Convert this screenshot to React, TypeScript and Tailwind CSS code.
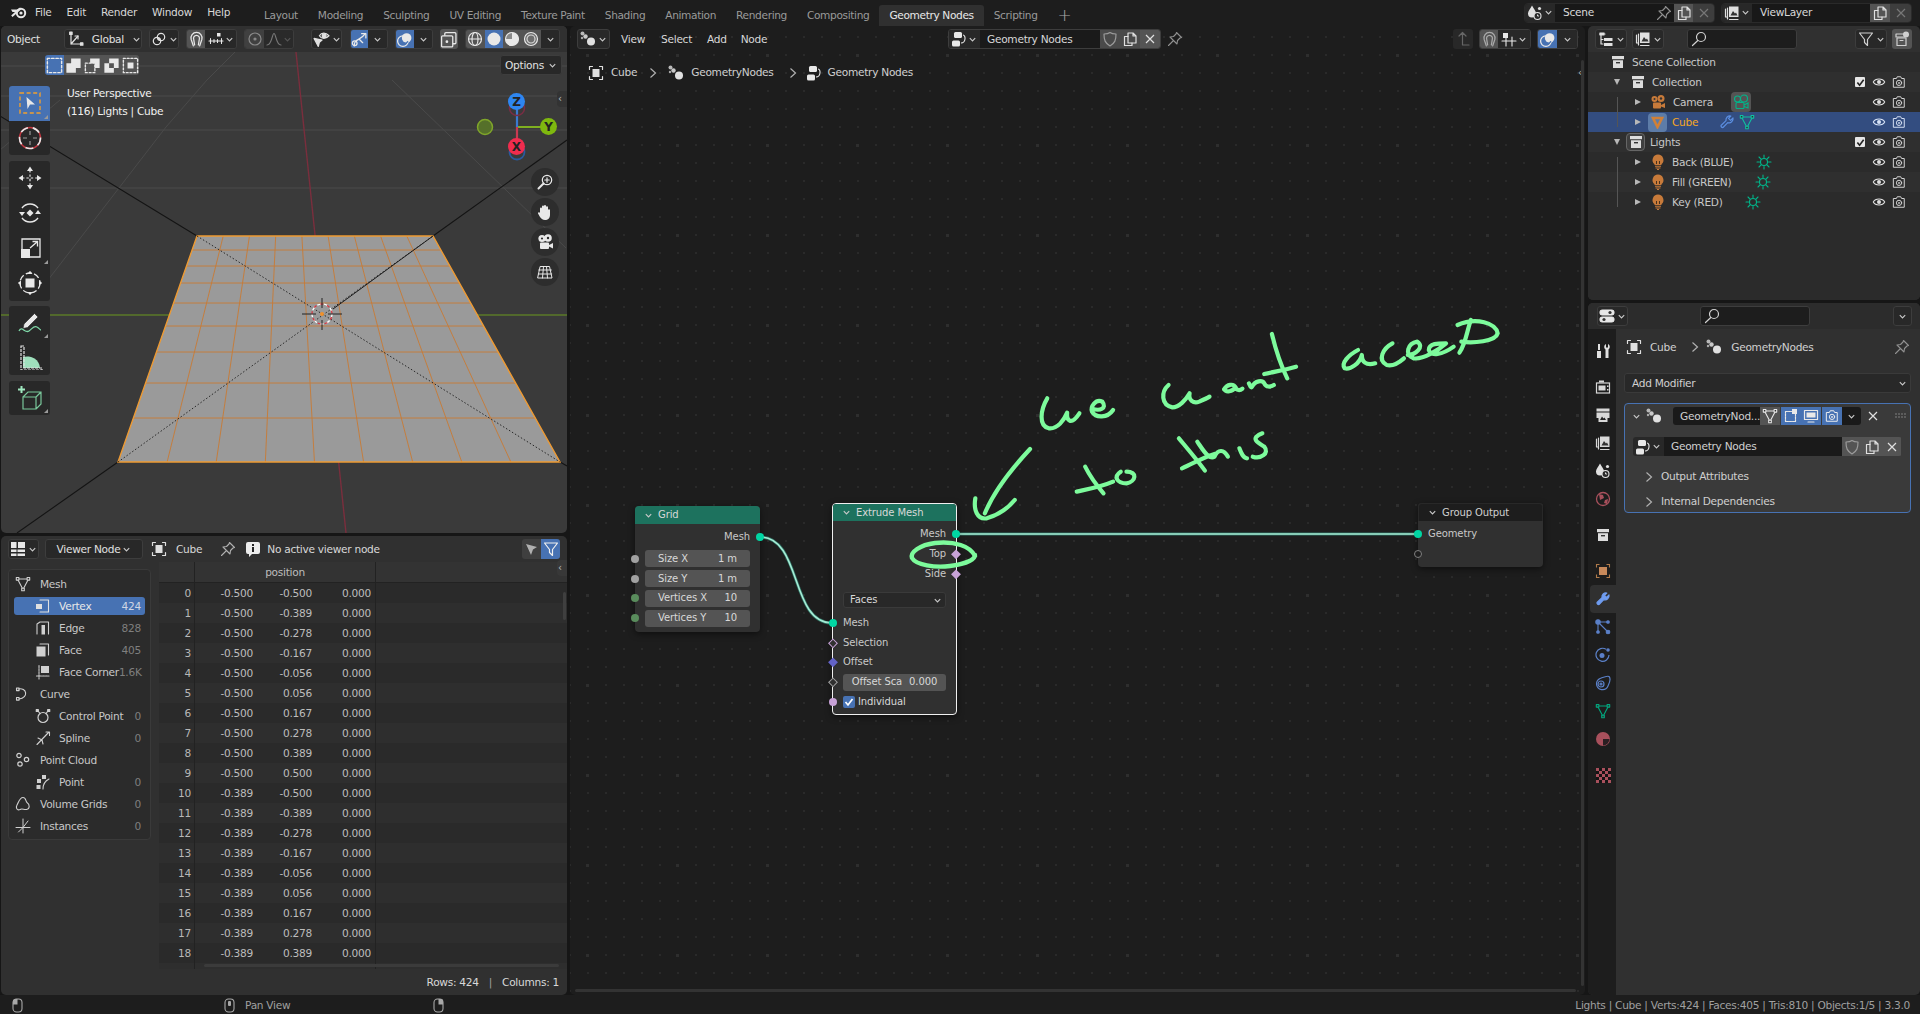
import React from "react";

type P = { className?: string; s?: number };
const Sv = ({ className = "", s = 16, children, w = 1.2 }: P & { children: React.ReactNode; w?: number }) => (
  <svg width={s} height={s} viewBox="0 0 16 16" fill="none" stroke="currentColor" strokeWidth={w} strokeLinecap="round" strokeLinejoin="round" className={"shrink-0 " + className}>
    {children}
  </svg>
);
const Chev = ({ className = "text-[#c8c8c8]" }: P) => (
  <svg width="9" height="9" viewBox="0 0 10 10" fill="none" stroke="currentColor" strokeWidth="1.3" className={"shrink-0 " + className}><path d="M2 3.5 L5 6.5 L8 3.5" /></svg>
);
const Right = ({ className = "text-[#b0b0b0]" }: P) => (
  <svg width="10" height="12" viewBox="0 0 10 12" fill="none" stroke="currentColor" strokeWidth="1.2" className={"shrink-0 " + className}><path d="M2.5 1.5 L7.5 6 L2.5 10.5" /></svg>
);
const Logo = () => (
  <svg width="18" height="16" viewBox="0 0 18 16" className="shrink-0">
    <circle cx="11" cy="9" r="4.2" fill="none" stroke="#e6e6e6" strokeWidth="2" />
    <circle cx="11" cy="9" r="1.6" fill="#e6e6e6" />
    <path d="M1 5.5 H7.5 L10 3.5 L11.5 5 L6 10 L2.5 13 L1.2 11.5 L5 8 L2.5 8 Z" fill="#e6e6e6" />
  </svg>
);
const Axes = () => <Sv><path d="M3 2 V13 H14 M3 13 L10 5" /><rect x="1.7" y="1" width="2.4" height="2.4" fill="currentColor" /><rect x="12.5" y="11.8" width="2.4" height="2.4" fill="currentColor" /><path d="M10 5 h-3 M10 5 v3" /></Sv>;
const Pivot = () => <Sv><circle cx="6" cy="10" r="3.7" /><circle cx="10" cy="6" r="3.7" /><circle cx="8" cy="8" r="1" fill="currentColor" /></Sv>;
const Magnet = () => <Sv s={17}><path d="M5 14 L3 8 A5.2 5.2 0 1 1 13 8 L11 14 M6.2 13 L5.4 8 A2.8 2.8 0 1 1 10.6 8 L9.8 13" /></Sv>;
const SnapInc = () => <Sv w={1.1}><path d="M1 10 H15 M2.5 7.5 V12.5 M6 8.5 V11.5 M9.5 8.5 V11.5 M13.5 7.5 V12.5" /><rect x="9" y="2" width="3.5" height="3.5" fill="currentColor" stroke="none" /></Sv>;
const GridSnap = () => <Sv w={1.1}><path d="M1 10 H15 M5 5 V15 M11 6 V15" /><rect x="2" y="2" width="5" height="5" fill="currentColor" stroke="none" /></Sv>;
const PropC = () => <Sv><circle cx="8" cy="8" r="6" /><circle cx="8" cy="8" r="1" fill="currentColor" /></Sv>;
const Falloff = () => <Sv><path d="M1 14 C6 14 6 2.5 8 2.5 C10 2.5 10 14 15 14" /></Sv>;
const VisIc = () => <Sv s={17}><path d="M6 4.5 C8 1.2 12 1.2 15 4.5 C12 7.8 8 7.8 6 4.5 Z" /><circle cx="10.5" cy="4.5" r="1.8" fill="currentColor" /><path d="M1 7 L8.5 8.5 L6 10.5 L5 14.5 Z" fill="currentColor" /></Sv>;
const GizmoIc = () => <Sv s={17}><path d="M3 14 C3 7 9 9 13 3" /><circle cx="3.5" cy="11.5" r="2.2" /><path d="M10 2.5 H14 V6.5" /><path d="M8 8 L11 11" /></Sv>;
const Overlay = () => <Sv s={17}><circle cx="6.5" cy="9.5" r="5" /><circle cx="10" cy="6.5" r="4.5" fill="currentColor" stroke="none" /><path d="M7 12 A4 4 0 0 0 11 10" stroke="#4772b3" /></Sv>;
const Xray = () => <Sv s={17}><rect x="4.5" y="1.5" width="10.5" height="10.5" rx="1" /><rect x="1.5" y="4.5" width="10.5" height="10.5" rx="1" fill="#545454" /><circle cx="6.5" cy="10" r=".7" fill="currentColor" /></Sv>;
const Wire = () => <Sv><circle cx="8" cy="8" r="6.5" /><ellipse cx="8" cy="8" rx="3" ry="6.5" /><path d="M1.5 8 H14.5" /></Sv>;
const SolidB = () => <Sv><circle cx="8" cy="8" r="6.5" fill="currentColor" stroke="none" /></Sv>;
const Mat = () => <Sv><circle cx="8" cy="8" r="6.5" fill="#8a8a8a" /><path d="M8 1.5 A6.5 6.5 0 0 1 8 14.5 L8 8 L1.5 8 A6.5 6.5 0 0 1 8 1.5 Z" fill="currentColor" stroke="none" transform="rotate(90 8 8)" /></Sv>;
const Rend = () => <Sv><circle cx="8" cy="8" r="6.5" fill="#6e6e6e" /><circle cx="8" cy="8" r="4" stroke="#d8d8d8" /></Sv>;
const M1 = () => <Sv s={19}><rect x="2" y="2" width="12" height="12" strokeDasharray="2 1.6" /></Sv>;
const M2 = () => <Sv s={19}><path d="M2 6 H6 V2 H14 V10 H10 V14 H2 Z" fill="currentColor" stroke="none" /></Sv>;
const M3 = () => <Sv s={19}><rect x="2" y="6" width="8" height="8" strokeDasharray="1.6 1.6" /><path d="M6 2 H14 V10 H10 V6 H6 Z" fill="currentColor" stroke="none" /></Sv>;
const M4 = () => <Sv s={19}><path d="M2 6 H6 V2 H14 V10 H10 V14 H2 Z M6 6 V10 H10 V6 Z" fillRule="evenodd" fill="currentColor" stroke="none" /></Sv>;
const M5 = () => <Sv s={19}><rect x="2" y="2" width="12" height="12" strokeDasharray="1.6 1.6" /><rect x="5.5" y="5.5" width="5" height="5" fill="currentColor" stroke="none" /></Sv>;

const T1 = () => <svg width="26" height="26" viewBox="0 0 26 26" fill="none"><rect x="3" y="3" width="20" height="20" stroke="#f0a030" strokeWidth="1.4" strokeDasharray="4 2.6" /><path d="M9.5 7 L18 14.5 L13 14.5 L10.5 19 Z" fill="#e8e8e8" /></svg>;
const T2 = () => <svg width="26" height="26" viewBox="0 0 26 26" fill="none"><circle cx="13" cy="13" r="10.5" stroke="#c0363f" strokeWidth="1.5" /><circle cx="13" cy="13" r="10.5" stroke="#e8e8e8" strokeWidth="1.6" strokeDasharray="8 5" /><path d="M13 6 V10 M13 16 V20 M6 13 H10 M16 13 H20" stroke="#999" strokeWidth="1.2" /></svg>;
const T3 = () => <svg width="26" height="26" viewBox="0 0 26 26" fill="#e8e8e8" stroke="#e8e8e8" strokeWidth="1.2"><path d="M13 5 V21 M5 13 H21" fill="none" strokeDasharray="2.4 2" /><path d="M13 1.5 L16 6 H10 Z M13 24.5 L16 20 H10 Z M1.5 13 L6 10 V16 Z M24.5 13 L20 10 V16 Z" stroke="none" /></svg>;
const T4 = () => <svg width="26" height="26" viewBox="0 0 26 26" fill="none" stroke="#e8e8e8" strokeWidth="1.4"><path d="M5 8 A10 10 0 0 1 21 8 M21 18 A10 10 0 0 1 5 18" /><path d="M13 9.5 L16.5 13 L13 16.5 L9.5 13 Z" fill="#e8e8e8" stroke="none" /><path d="M2 12 H8 L5 16 Z M18 14 H24 L21 10 Z" fill="#e8e8e8" stroke="none" /></svg>;
const T5 = () => <svg width="26" height="26" viewBox="0 0 26 26" fill="none" stroke="#e8e8e8" strokeWidth="1.3"><path d="M5 15 V4 H23 V22 H13" /><rect x="4" y="14" width="9" height="9" fill="#e8e8e8" stroke="none" /><path d="M13 13 L20 7 M15.5 6.5 H20.5 V11.5" /></svg>;
const T6 = () => <svg width="26" height="26" viewBox="0 0 26 26" fill="none" stroke="#e8e8e8" strokeWidth="1.3"><circle cx="13" cy="13" r="10" strokeDasharray="6 2.5" /><rect x="8.5" y="8.5" width="9" height="9" fill="#e8e8e8" stroke="none" /><path d="M13 .8 L15.5 4 H10.5 Z M13 25.2 L15.5 22 H10.5 Z M.8 13 L4 10.5 V15.5 Z M25.2 13 L22 10.5 V15.5 Z" fill="#e8e8e8" stroke="none" /></svg>;
const T7 = () => <svg width="26" height="26" viewBox="0 0 26 26" fill="none"><path d="M7 14 L17.5 3.5 L21 7 L10.5 17.5 L6 18.5 Z" fill="#e8e8e8" stroke="#222" strokeWidth=".6" /><path d="M2 21 C5 15 8 24 12 21 C15 19 17 15 20 17 C22 18 23 20 24 20" stroke="#7fd8a8" strokeWidth="1.3" /></svg>;
const T8 = () => <svg width="26" height="26" viewBox="0 0 26 26" fill="none"><path d="M6 13 A13 12 0 0 1 23 24 H6 Z" fill="#9fe0bd" /><path d="M4 2 H7 V24 H25 V26 H4 Z" fill="none" stroke="#e0e0e0" strokeWidth="1.2" strokeDasharray="3 1" /></svg>;
const T9 = () => <svg width="26" height="26" viewBox="0 0 26 26" fill="none" stroke="#79c79a" strokeWidth="1.2"><path d="M6 12 H19 V24 H6 Z M6 12 L11 7 H24 V19 L19 24 M19 12 L24 7" /><path d="M1 4.5 H8 M4.5 1 V8" stroke="#9fe8bf" strokeWidth="2" /></svg>;

const ObjB = ({ className = "text-[#e0e0e0]" }: P) => <Sv className={className}><path d="M1.5 4.5 V1.5 H4.5 M11.5 1.5 H14.5 V4.5 M14.5 11.5 V14.5 H11.5 M4.5 14.5 H1.5 V11.5" /><rect x="4.5" y="4" width="7" height="8" fill="currentColor" stroke="none" /></Sv>;
const PinI = ({ className = "text-[#909090]" }: P) => <Sv className={className} w={1.1}><path d="M9.5 1.5 L14.5 6.5 L13 7 L10.5 9.5 L10 13 L3 6 L6.5 5.5 L9 3 Z M6.5 9.5 L1.5 14.5" /></Sv>;
const GeoI = () => <svg width="16" height="16" viewBox="0 0 16 16" fill="#e0e0e0" className="shrink-0"><circle cx="2.5" cy="2.5" r="2" fill="#b8b8b8" /><circle cx="5.5" cy="5.5" r="2.2" fill="#c8c8c8" /><circle cx="11" cy="10.5" r="4" /><circle cx="2" cy="7" r="1.2" fill="#aaa" /></svg>;
const NodeTreeI = () => <svg width="15" height="16" viewBox="0 0 15 16" fill="none" stroke="#e8e8e8" strokeWidth="1.1" className="shrink-0"><rect x="2" y="1" width="8" height="6" rx="1.5" fill="#e8e8e8" stroke="none" /><rect x="0" y="9.5" width="8" height="6" rx="1.5" fill="#e8e8e8" stroke="none" /><path d="M11 4 C14 4 14 12 9 12" /></svg>;
const Eye = ({ className = "text-[#e0e0e0]" }: P) => <Sv s={14} className={className} w={1.3}><path d="M1.5 8 C4 3.5 12 3.5 14.5 8 C12 12.5 4 12.5 1.5 8 Z" /><circle cx="8" cy="8" r="2.3" fill="currentColor" stroke="none" /></Sv>;
const CamR = ({ className = "text-[#d8d8d8]" }: P) => <Sv s={14} className={className} w={1.1}><path d="M2 4 H5 L6 2 H10 L11 4 H14 V14 H2 Z" /><circle cx="8" cy="9" r="3" /><circle cx="8" cy="9" r="1" fill="currentColor" stroke="none" /></Sv>;
const Check = () => <span className="w-[10px] h-[10px] bg-[#e6e6e6] rounded-[1px] flex items-center justify-center"><svg width="9" height="9" viewBox="0 0 10 10" fill="none" stroke="#222" strokeWidth="1.8"><path d="M1.5 5 L4 8 L8.5 2" /></svg></span>;
const Box = () => <svg width="14" height="14" viewBox="0 0 14 14" className="shrink-0"><rect x="1" y="1" width="12" height="3.2" fill="#dcdcdc" /><path d="M2 5.2 H12 V13 H2 Z" fill="#dcdcdc" /><rect x="5" y="7" width="4" height="1.4" fill="#333" /></svg>;
const MeshI = ({ className = "text-[#00b58a]" }: P) => <Sv className={className} w={1.1}><path d="M2.5 3 H13.5 L8 13.5 Z" /><rect x="1.3" y="1.5" width="2.6" height="2.6" fill="#303030" /><rect x="12.1" y="1.5" width="2.6" height="2.6" fill="#303030" /><rect x="6.7" y="12.2" width="2.6" height="2.6" fill="#303030" /></Sv>;
const Sun = ({ className = "text-[#00b58a]" }: P) => <Sv className={className} w={1.1}><circle cx="8" cy="8" r="3.5" /><path d="M8 1 V3.5 M8 12.5 V15 M1 8 H3.5 M12.5 8 H15 M3 3 L4.8 4.8 M11.2 11.2 L13 13 M3 13 L4.8 11.2 M11.2 4.8 L13 3" /></Sv>;
const Bulb = () => <svg width="14" height="16" viewBox="0 0 14 16" className="shrink-0"><path d="M7 0.5 A5.5 5.5 0 0 1 10.5 10.2 V11 H3.5 V10.2 A5.5 5.5 0 0 1 7 0.5 Z" fill="#c77a3a" /><path d="M5.5 7 V10 M8.5 7 V10" stroke="#3a2a1a" strokeWidth=".9" /><path d="M4 12.3 H10 M4.5 14 H9.5 M6 15.5 H8" stroke="#c77a3a" strokeWidth="1.1" /></svg>;
const CamO = () => <svg width="16" height="16" viewBox="0 0 16 16" className="shrink-0"><circle cx="4.5" cy="5" r="3" fill="#c77a3a" /><circle cx="11" cy="4.5" r="3.5" fill="#c77a3a" /><rect x="3" y="8.5" width="8" height="6" rx="1" fill="#c77a3a" /><path d="M11 11 L15 9 V14 L11 12.5 Z" fill="#c77a3a" /><circle cx="4.5" cy="5" r="1" fill="#333" /><circle cx="11" cy="4.5" r="1.2" fill="#333" /></svg>;
const CamG = () => <svg width="16" height="16" viewBox="0 0 16 16" fill="none" stroke="#00b58a" strokeWidth="1.1" className="shrink-0"><circle cx="4.5" cy="5" r="3" /><circle cx="11" cy="4.5" r="3.5" /><rect x="3" y="8.5" width="8" height="6" rx="1" /><path d="M11 11 L15 9 V14 L11 12.5" /></svg>;
const TriO = () => <span className="w-[19px] h-[19px] rounded-[4px] bg-[#5d7ca8] flex items-center justify-center -ml-[1px]"><svg width="13" height="13" viewBox="0 0 13 13" fill="none" stroke="#d08038" strokeWidth="2.6"><path d="M2 2 H11 L6.5 11 Z" /></svg></span>;
const Wr = ({ className = "text-[#5b8ee0]", f }: P & { f?: boolean }) => <Sv className={className} w={1.2}><path d="M14 4 A4 4 0 0 1 8.8 8.6 L4 13.5 A1.7 1.7 0 0 1 2 11.5 L7 6.6 A4 4 0 0 1 11.8 2 L9.5 4.4 L11.5 6.4 Z" fill={f ? "currentColor" : "none"} /></Sv>;

const TreeI = () => <Sv><path d="M1.5 3 H7 M3 3.5 V13 H5 M3 8.5 H5" /><rect x="6" y="7" width="8.5" height="3" fill="currentColor" stroke="none" /><rect x="6" y="12" width="8.5" height="3" fill="currentColor" stroke="none" /><rect x="1.5" y="1.5" width="5" height="3" fill="currentColor" stroke="none" /></Sv>;
const ImagesI = () => <Sv><path d="M3 12 H1.5 V4 M5.5 14.5 H14 M3.5 14 V3" /><rect x="5" y="1.5" width="9.5" height="10.5" fill="currentColor" stroke="none" /><path d="M6.5 10.5 L9 6 L11 8.5 L12 7.5 L13.5 10.5 Z" fill="#333" stroke="none" /></Sv>;
const SearchI = () => <Sv className="text-[#d0d0d0]"><circle cx="10" cy="6" r="4.5" /><path d="M6.8 9.5 L1.5 14.5" /></Sv>;
const FilterI = ({ className = "text-[#d0d0d0]" }: P) => <Sv className={className}><path d="M1.5 2 H14.5 L9.5 8.5 V14.5 L6.5 11.5 V8.5 Z" /></Sv>;
const NewColl = () => <Sv className="text-[#d0d0d0]"><rect x="2" y="3" width="9" height="3" fill="none" /><path d="M3 7 H12 V14.5 H3 Z M6 9.5 H9" /><circle cx="12" cy="3.5" r="3" fill="currentColor" stroke="none" /></Sv>;
const SceneI = () => <svg width="16" height="16" viewBox="0 0 16 16" className="shrink-0" fill="none"><path d="M5 0.5 C7 4 9 6 9 8.5 A4 4 0 1 1 1 8.5 C1 6 3 4 5 0.5 Z" fill="#e0e0e0" /><circle cx="10.5" cy="11" r="3.5" stroke="#e0e0e0" strokeWidth="1.1" fill="#2a2a2a" /><circle cx="12.5" cy="3.5" r="1.6" fill="#e0e0e0" /><path d="M10.5 9.5 V11 H12" stroke="#e0e0e0" /></svg>;
const CopyI = ({ className = "text-[#e0e0e0]" }: P) => <Sv className={className}><path d="M6 2 H11 L14 5 V12 H6 Z M11 2 V5 H14" /><path d="M6 5.5 H2.5 V14.5 H10 V12" /></Sv>;
const XI = ({ className = "text-[#e0e0e0]" }: P) => <svg width="12" height="12" viewBox="0 0 12 12" fill="none" stroke="currentColor" strokeWidth="1.2" className={"shrink-0 " + className}><path d="M2 2 L10 10 M10 2 L2 10" /></svg>;
const Shield = () => <Sv className="text-[#9a9a9a]"><path d="M8 1.5 C10 3 12 3 14 3 C14 9 13 12 8 15 C3 12 2 9 2 3 C4 3 6 3 8 1.5 Z" /></Sv>;

const bar = "flex items-center justify-center h-[20px] shrink-0";
const Dd = ({ className = "", children }: { className?: string; children: React.ReactNode }) => (
  <div className={`${bar} gap-[2px] bg-[#282828] rounded-[3px] border border-[#3d3d3d] text-[#e0e0e0] ${className}`}>{children}</div>
);
const Seg = ({ className = "", children }: { className?: string; children: React.ReactNode }) => (
  <div className={`${bar} text-[#e8e8e8] ${className}`}>{children}</div>
);

function TopBar() {
  const menu: [string, string][] = [["File", "ml-[35px]"], ["Edit", "ml-[15px]"], ["Render", "ml-[15px]"], ["Window", "ml-[15px]"], ["Help", "ml-[15px]"]];
  const tabs = ["Layout", "Modeling", "Sculpting", "UV Editing", "Texture Paint", "Shading", "Animation", "Rendering", "Compositing", "Geometry Nodes", "Scripting"];
  return (
    <div className="relative flex h-[26px] shrink-0 bg-[#1d1d1d] text-[#d8d8d8]">
      <div className="absolute left-[10px] top-[4px]"><Logo /></div>
      <div className="flex items-center h-[24px]">
        {menu.map(([m, c]) => <span key={m} className={c}>{m}</span>)}
      </div>
      <div className="absolute left-[254px] top-[5px] flex h-[21px] tracking-[-0.36px]">
        {tabs.map((t) => (
          <div key={t} className={`flex items-center px-[10px] rounded-t-[3px] ${t === "Geometry Nodes" ? "bg-[#303030] text-[#e8e8e8]" : "text-[#9a9a9a]"}`}>{t}</div>
        ))}
        <div className="flex items-center pl-[10px] text-[#a8a8a8] text-[17px] font-light">+</div>
      </div>
      <div className="ml-auto flex items-center gap-[6px] pr-[8px] h-[25px]">
        <div className="flex h-[20px] w-[191px] rounded-[4px] overflow-hidden border border-[#2a2a2a]">
          <div className="flex w-[30px] items-center justify-center gap-[1px] bg-[#282828]"><SceneI /><Chev /></div>
          <div className="flex flex-1 items-center justify-between bg-[#181818] pl-[8px] pr-[2px] text-[#d8d8d8]">Scene<PinI /></div>
          <div className="flex w-[19px] items-center justify-center bg-[#545454]"><CopyI /></div>
          <div className="flex w-[21px] items-center justify-center bg-[#3d3d3d]"><XI className="text-[#777]" /></div>
        </div>
        <div className="flex h-[20px] w-[191px] rounded-[4px] overflow-hidden border border-[#2a2a2a]">
          <div className="flex w-[30px] items-center justify-center gap-[1px] bg-[#282828] text-[#e0e0e0]"><ImagesI /><Chev /></div>
          <div className="flex flex-1 items-center bg-[#181818] pl-[8px] text-[#d8d8d8]">ViewLayer</div>
          <div className="flex w-[20px] items-center justify-center bg-[#545454]"><CopyI /></div>
          <div className="flex w-[21px] items-center justify-center bg-[#3d3d3d]"><XI className="text-[#777]" /></div>
        </div>
      </div>
    </div>
  );
}

function Scene3D() {
  const tl: [number, number] = [197, 236], tr: [number, number] = [433, 236], bl: [number, number] = [118, 462], br: [number, number] = [560, 462];
  const ys = [236, 250, 266, 283, 303, 326, 352, 383, 418, 462];
  const lerp = (a: number, b: number, t: number) => a + (b - a) * t;
  const xl = (y: number) => lerp(tl[0], bl[0], (y - 236) / 226);
  const xr = (y: number) => lerp(tr[0], br[0], (y - 236) / 226);
  return (
    <svg className="absolute inset-0 w-full h-full" viewBox="1 26 566 507" preserveAspectRatio="none">
      <g stroke="#4a4a4a" strokeWidth="1" fill="none">
        <path d="M0 96 H567 M0 130 H567 M0 188 H567 M0 66 H567" />
        <path d="M48 280 L166 127 L207 80 L235 52" />
        <path d="M392 80 L566 248" />
        <path d="M0 150 L60 100" />
      </g>
      <path d="M296 52 L346 533" stroke="#7a2e3d" strokeWidth="1.4" />
      <path d="M1 315 H567" stroke="#5b7a28" strokeWidth="1.4" />
      <g stroke="#141414" strokeWidth="1.1">
        <path d="M0 116 L197 236 M433 236 L567 140 M118 462 L17 533 M560 462 L567 466" />
      </g>
      <path d={`M${tl} L${tr} L${br} L${bl} Z`} fill="#9a9a9a" />
      <g stroke="#c87a34" strokeWidth=".9" fill="none">
        {ys.slice(1, -1).map((y) => <path key={y} d={`M${xl(y)} ${y} H${xr(y)}`} />)}
        {Array.from({ length: 8 }, (_, i) => {
          const t = (i + 1) / 9;
          return <path key={i} d={`M${lerp(tl[0], tr[0], t)} 236 L${lerp(bl[0], br[0], t)} 462`} />;
        })}
      </g>
      <path d={`M${tl} L${tr} L${br} L${bl} Z`} fill="none" stroke="#ee9a32" strokeWidth="1.4" />
      <path d={`M${tl} L${br} M${bl} L${tr}`} stroke="#1c1c1c" strokeWidth=".9" strokeDasharray="1.5 2" />
      <path d="M333 309 L433 236" stroke="#1c1c1c" strokeWidth="1" />
      <g fill="none">
        <circle cx="322" cy="314" r="10" stroke="#fff" strokeWidth="1.3" strokeDasharray="4 3" />
        <circle cx="322" cy="314" r="10" stroke="#d63a44" strokeWidth="1.3" strokeDasharray="3 4" strokeDashoffset="4" />
        <path d="M302 314 H316 M328 314 H342 M322 298 V308 M322 320 V330" stroke="#222" strokeWidth="1" />
        <circle cx="322" cy="314" r="2" fill="#f0902a" />
      </g>
      <g strokeWidth="2.2">
        <path d="M517 127 H549" stroke="#7fb020" />
        <path d="M517 127 V102" stroke="#3a7ad0" />
        <path d="M517 127 V147" stroke="#c83a52" />
      </g>
      <circle cx="517" cy="108" r="7.5" fill="none" stroke="#7a2d44" strokeWidth="1.6" />
      <circle cx="517" cy="152" r="7.5" fill="none" stroke="#2a5a9e" strokeWidth="1.8" />
      <circle cx="485" cy="127" r="7.5" fill="#55702a" stroke="#7fa52a" strokeWidth="1.5" />
    </svg>
  );
}

const ToolBtn = ({ children, className = "", corner }: { children: React.ReactNode; className?: string; corner?: boolean }) => (
  <div className={`relative flex items-center justify-center h-[34.5px] w-[41px] ${className}`}>
    {children}
    {corner && <span className="absolute right-[2px] bottom-[2px] w-0 h-0 border-l-[4px] border-l-transparent border-b-[4px] border-b-[#9a9a9a]" />}
  </div>
);
const Nav = ({ children }: { children: React.ReactNode }) => (
  <div className="w-[28px] h-[28px] rounded-full bg-[#2d2d2d] flex items-center justify-center text-[#e8e8e8]">{children}</div>
);
const GizBall = ({ l, className }: { l: string; className: string }) => (
  <div className={`absolute w-[17px] h-[17px] rounded-full flex items-center justify-center text-[#222] text-[12px] font-bold tracking-normal ${className}`}>{l}</div>
);

function Viewport() {
  return (
    <div className="relative h-[507px] shrink-0 overflow-hidden rounded-[5px] bg-[#3a3a3a]">
      <Scene3D />
      <div className="relative flex items-center h-[26px] bg-[#303030]/90 pl-[6px] pr-[7px] text-[#e0e0e0]">
        <span className="w-[58px]">Object</span>
        <Dd className="w-[78.5px] justify-start pl-[3px]"><Axes /><span className="ml-[6px] flex-1">Global</span><Chev /></Dd>
        <Dd className="w-[30px] ml-[7px]"><Pivot /><Chev /></Dd>
        <div className="flex ml-[7px] rounded-[3px] overflow-hidden border border-[#3d3d3d]">
          <Seg className="w-[18px] bg-[#545454] !h-[18px] text-[#aaa]"><Magnet /></Seg>
          <Seg className="w-[32px] gap-[1px] bg-[#282828] !h-[18px]"><SnapInc /><Chev /></Seg>
        </div>
        <div className="flex ml-[7px] rounded-[3px] overflow-hidden border border-[#3d3d3d]">
          <Seg className="w-[19px] bg-[#404040] !h-[18px] !text-[#8a8a8a]"><PropC /></Seg>
          <Seg className="w-[30px] gap-[1px] bg-[#2a2a2a] !h-[18px] !text-[#777]"><Falloff /><Chev className="text-[#555]" /></Seg>
        </div>
        <Dd className="w-[31px] ml-[17px]"><VisIc /><Chev /></Dd>
        <div className="flex ml-[8px] rounded-[3px] overflow-hidden border border-[#3d3d3d]">
          <Seg className="w-[17px] bg-[#4772b3] !h-[18px]"><GizmoIc /></Seg>
          <Seg className="w-[19px] bg-[#282828] !h-[18px]"><Chev /></Seg>
        </div>
        <div className="flex ml-[7px] rounded-[3px] overflow-hidden border border-[#3d3d3d]">
          <Seg className="w-[18px] bg-[#4772b3] !h-[18px]"><Overlay /></Seg>
          <Seg className="w-[19px] bg-[#282828] !h-[18px]"><Chev /></Seg>
        </div>
        <Seg className="w-[18px] ml-[7px] bg-[#545454] rounded-[3px]"><Xray /></Seg>
        <div className="flex ml-[7px] rounded-[3px] overflow-hidden border border-[#3d3d3d]">
          <Seg className="w-[19px] bg-[#545454] !h-[18px]"><Wire /></Seg>
          <Seg className="w-[18px] bg-[#4772b3] !h-[18px]"><SolidB /></Seg>
          <Seg className="w-[19px] bg-[#545454] !h-[18px]"><Mat /></Seg>
          <Seg className="w-[19px] bg-[#545454] !h-[18px]"><Rend /></Seg>
          <Seg className="w-[20px] bg-[#282828] !h-[18px]"><Chev /></Seg>
        </div>
      </div>
      <div className="relative flex items-center h-[26px] pl-[44px] pr-[5px]">
        <div className="flex rounded-[3px] overflow-hidden text-[#e8e8e8]">
          <Seg className="w-[19px] bg-[#4772b3]"><M1 /></Seg>
          <Seg className="w-[19px] bg-[#545454]"><M2 /></Seg>
          <Seg className="w-[19px] bg-[#545454]"><M3 /></Seg>
          <Seg className="w-[19px] bg-[#545454]"><M4 /></Seg>
          <Seg className="w-[18px] bg-[#545454]"><M5 /></Seg>
        </div>
        <Dd className="ml-auto w-[62px] gap-[4px]"><span>Options</span><Chev /></Dd>
      </div>
      <span className="absolute right-[0px] top-[65px] w-[10px] h-[16px] rounded-l-[4px] bg-[#333] text-[#bbb] text-[10px] leading-[15px] pl-[1px]">‹</span>

      <div className="absolute left-[66px] top-[58px] text-[#f0f0f0] leading-[18px]">
        <div>User Perspective</div>
        <div>(116) Lights | Cube</div>
      </div>

      <div className="absolute left-[8px] top-[60px] flex flex-col">
        <div className="rounded-[3px] overflow-hidden bg-[#282828] w-[41px]">
          <ToolBtn className="bg-[#4772b3]" corner><T1 /></ToolBtn>
          <ToolBtn><T2 /></ToolBtn>
        </div>
        <div className="mt-[6px] rounded-[3px] overflow-hidden bg-[#282828] w-[41px] flex flex-col gap-[.5px]">
          <ToolBtn><T3 /></ToolBtn>
          <ToolBtn><T4 /></ToolBtn>
          <ToolBtn corner><T5 /></ToolBtn>
          <ToolBtn><T6 /></ToolBtn>
        </div>
        <div className="mt-[5px] rounded-[3px] overflow-hidden bg-[#282828] w-[41px]">
          <ToolBtn corner><T7 /></ToolBtn>
          <ToolBtn><T8 /></ToolBtn>
        </div>
        <div className="mt-[6px] rounded-[3px] overflow-hidden bg-[#282828] w-[41px]">
          <ToolBtn corner><T9 /></ToolBtn>
        </div>
      </div>

      <GizBall l="Z" className="left-[507px] top-[67px] bg-[#2e86f0]" />
      <GizBall l="Y" className="left-[539px] top-[92px] bg-[#7fb80f]" />
      <GizBall l="X" className="left-[507px] top-[112px] bg-[#f02c4e]" />

      <div className="absolute left-[530px] top-[142px] flex flex-col gap-[2px]">
        <Nav><Sv><circle cx="10" cy="6" r="4.7" /><path d="M6.5 9.5 L1.5 14.5" strokeWidth="2" /><path d="M10 3.8 V8.2 M7.8 6 H12.2" /></Sv></Nav>
        <Nav><svg width="16" height="17" viewBox="0 0 16 17" fill="#e8e8e8"><path d="M3 9 V4.5 A1 1 0 0 1 5 4.5 V2.5 A1 1 0 0 1 7 2.5 V2 A1 1 0 0 1 9 2 V3 A1 1 0 0 1 11 3.5 V6 A1 1 0 0 1 13 6.5 V11 C13 14 11 16 8 16 C5.5 16 4 14.5 3 13 L1 9.5 A1 1 0 0 1 3 9 Z" /></svg></Nav>
        <Nav><svg width="17" height="16" viewBox="0 0 17 16" fill="#e8e8e8"><circle cx="5" cy="4.5" r="3.6" /><circle cx="11" cy="4" r="3.8" /><rect x="3" y="8.5" width="9" height="6.5" rx="1" /><path d="M12 11 L16 9 V14.5 L12 12.5 Z" /><circle cx="5" cy="4.5" r="1.1" fill="#2d2d2d" /><circle cx="11" cy="4" r="1.2" fill="#2d2d2d" /></svg></Nav>
        <Nav><Sv w={1}><path d="M3.5 2.5 H12.5 L15 14 H1 Z M1.7 6 H14.3 M1.3 10 H14.7 M6.5 2.5 L5.5 14 M9.5 2.5 L10.5 14" /></Sv></Nav>
      </div>
    </div>
  );
}

const IcVert = () => <Sv className="text-[#e0e0e0]" w={1.1}><path d="M5 2 H13.5 V14 H5" /><rect x="1" y="6" width="6" height="5" fill="currentColor" stroke="none" /></Sv>;
const IcEdge = () => <Sv className="text-[#d0d0d0]" w={1.1}><path d="M2 14 V4 L5 2 H13.5 V14" /><rect x="6.5" y="5" width="3.5" height="9.5" fill="currentColor" stroke="none" /></Sv>;
const IcFace = () => <Sv className="text-[#d0d0d0]" w={1.1}><path d="M5 2 H13.5 V13" /><rect x="1.5" y="4.5" width="9" height="10" fill="currentColor" stroke="none" /></Sv>;
const IcCorner = () => <Sv className="text-[#d0d0d0]" w={1.1}><path d="M1.5 12 H14 M4 1.5 V15" strokeDasharray="2 1" /><rect x="6" y="2" width="8" height="7" fill="currentColor" stroke="none" /></Sv>;
const IcCurve = () => <Sv className="text-[#d0d0d0]" w={1.1}><path d="M3 3 C12 1 14 12 4 13" /><rect x="1.5" y="2" width="2.6" height="2.6" /><rect x="1.5" y="11.5" width="2.6" height="2.6" /></Sv>;
const IcCP = () => <Sv className="text-[#d0d0d0]" w={1.2}><circle cx="8" cy="9.5" r="5" /><path d="M3 3 L5 5.5 M13 3 L11 5.5" /><rect x="1.3" y="1.5" width="2" height="2" fill="currentColor" /><rect x="12.7" y="1.5" width="2" height="2" fill="currentColor" /></Sv>;
const IcSpline = () => <Sv className="text-[#d0d0d0]" w={1.1}><path d="M2 14.5 L14 2 M11 2 H14.5 V5.5 M3 8 L7 10 L8 14" /></Sv>;
const IcPC = () => <Sv className="text-[#d0d0d0]" w={1.2}><circle cx="4" cy="3.5" r="2.2" /><circle cx="11.5" cy="7.5" r="2.2" /><circle cx="5" cy="12" r="2.2" /></Sv>;
const IcPt = () => <Sv className="text-[#d0d0d0]" w={1.1}><rect x="7" y="1" width="4" height="4" fill="currentColor" stroke="none" /><rect x="2" y="5" width="4" height="4" fill="currentColor" stroke="none" /><rect x="1.5" y="11" width="4" height="4" fill="currentColor" stroke="none" /><path d="M14 5 C10 7 8 10 8 15" /></Sv>;
const IcVol = () => <Sv className="text-[#d0d0d0]" w={1.1}><path d="M8 1.5 C11 1.5 10.5 5 12 6.5 C15 8.5 15 13 11.5 13.5 C9 14 7 12 5 13.5 C2 15 .5 11.5 2 9 C3.5 6.5 4.5 1.5 8 1.5 Z" /></Sv>;
const IcInst = () => <Sv className="text-[#d0d0d0]" w={1}><path d="M8 1 V15 M1 9.5 H15 M8 9.5 L13 3 M8 9.5 L3.5 14" /></Sv>;

function Spreadsheet() {
  const side: [string, string, number, React.ReactNode, boolean?][] = [
    ["Mesh", "", 0, <MeshI className="text-[#d0d0d0]" />],
    ["Vertex", "424", 1, <IcVert />, true],
    ["Edge", "828", 1, <IcEdge />],
    ["Face", "405", 1, <IcFace />],
    ["Face Corner", "1.6K", 1, <IcCorner />],
    ["Curve", "", 0, <IcCurve />],
    ["Control Point", "0", 1, <IcCP />],
    ["Spline", "0", 1, <IcSpline />],
    ["Point Cloud", "", 0, <IcPC />],
    ["Point", "0", 1, <IcPt />],
    ["Volume Grids", "0", 0, <IcVol />],
    ["Instances", "0", 0, <IcInst />],
  ];
  const ys = ["-0.500", "-0.389", "-0.278", "-0.167", "-0.056", "0.056", "0.167", "0.278", "0.389", "0.500"];
  const rows = Array.from({ length: 20 }, (_, i) => [i, i < 10 ? "-0.500" : "-0.389", ys[i % 10]] as const);
  return (
    <div className="relative flex flex-col h-[459px] mt-[3px] rounded-[5px] overflow-hidden bg-[#303030] text-[#c8c8c8]">
      <div className="flex items-center h-[26px] shrink-0 pl-[7px] pr-[7px] text-[#d8d8d8]">
        <Dd className="w-[31px]"><svg width="16" height="16" viewBox="0 0 16 16" fill="#e8e8e8"><path d="M1 1 H7 V7 H1 Z M8 1 H15 V7 H8 Z M1 8.5 H15 V11 H1 Z M1 12.5 H15 V15 H1 Z M1 8.5" /><path d="M7 1 V15 M1 7.5 H15" stroke="#2a2a2a" /></svg><Chev /></Dd>
        <Dd className="w-[98px] ml-[6px] justify-between px-[7px]"><span>Viewer Node</span><Chev /></Dd>
        <span className="ml-[8px]"><ObjB /></span>
        <span className="ml-[9px]">Cube</span>
        <span className="ml-[18px]"><PinI className="text-[#b0b0b0]" /></span>
        <span className="ml-[9px]"><svg width="16" height="17" viewBox="0 0 16 17"><path d="M3 1 H13 A2 2 0 0 1 15 3 V11 A2 2 0 0 1 13 13 H7 L4 16 V13 H3 A2 2 0 0 1 1 11 V3 A2 2 0 0 1 3 1 Z" fill="#ececec" /><rect x="7" y="3" width="2" height="2" fill="#222" /><rect x="7" y="6" width="2" height="5" fill="#222" /></svg></span>
        <span className="ml-[6px]">No active viewer node</span>
        <div className="ml-auto flex rounded-[3px] overflow-hidden">
          <Seg className="w-[19px] bg-[#3f3f3f]"><svg width="13" height="13" viewBox="0 0 13 13" fill="#b0b0b0"><path d="M1 1 L12 4 L8 6.5 L6 12 Z" /></svg></Seg>
          <Seg className="w-[19px] bg-[#4772b3]"><FilterI className="text-[#f0f0f0]" /></Seg>
        </div>
      </div>
      <div className="flex flex-1 min-h-0">
        <div className="w-[143px] ml-[7px] mt-[7px] h-[271px] shrink-0 rounded-[4px] bg-[#2b2b2b] border border-[#3a3a3a] px-[5px] pt-[3px]">
          {side.map(([n, c, lvl, ic, act]) => (
            <div key={n} className="h-[22px] flex items-center">
              <div className={`flex items-center w-full h-[18px] rounded-[3px] pr-[4px] ${act ? "bg-[#4772b3] text-[#e8e8e8]" : ""} ${lvl ? "pl-[21px]" : "pl-[1px]"}`}>
                <span className={`shrink-0 ${lvl ? "w-[24px]" : "w-[25px]"}`}>{ic}</span>
                <span className="whitespace-nowrap">{n}</span>
                <span className={`ml-auto ${act ? "text-[#cfd6e4]" : "text-[#7f7f7f]"}`}>{c}</span>
              </div>
            </div>
          ))}
        </div>
        <div className="relative ml-[8px] flex-1 h-[407px] overflow-hidden bg-[#2a2a2a] text-[#bdbdbd]">
          <div className="flex h-[21px] bg-[#333333] border-b border-[#222]">
            <div className="w-[36px] border-r border-[#222]" />
            <div className="w-[181px] border-r border-[#222] flex items-center justify-center">position</div>
          </div>
          {rows.map(([i, a, b]) => (
            <div key={i} className={`flex h-[20px] items-center ${i % 2 ? "bg-[#2e2e2e]" : "bg-[#2a2a2a]"}`}>
              <div className="w-[36px] h-full flex items-center justify-end pr-[3px] border-r border-[#222] text-[#b8b8b8]">{i}</div>
              <div className="w-[181px] h-full flex border-r border-[#222]">
                <div className="w-[58px] h-full flex items-center justify-end">{a}</div>
                <div className="w-[59px] h-full flex items-center justify-end">{b}</div>
                <div className="w-[59px] h-full flex items-center justify-end">0.000</div>
              </div>
            </div>
          ))}
          <div className="absolute left-[45px] right-[8px] bottom-[2px] h-[3px] bg-[#3b3b3b] rounded-full" />
          <div className="absolute right-[1px] top-[30px] w-[3px] h-[28px] bg-[#3f3f3f] rounded-full" />
        </div>
      </div>
      <div className="h-[26px] shrink-0 flex items-center justify-end pr-[8px] text-[#d8d8d8]">
        Rows: 424<span className="mx-[10px] text-[#a0a0a0]">|</span>Columns: 1
      </div>
      <span className="absolute right-0 top-[24px] w-[10px] h-[16px] rounded-l-[4px] bg-[#383838] text-[#bbb] text-[10px] leading-[15px] pl-[1px]">‹</span>
    </div>
  );
}

const Sock = ({ side, color, kind = "c", hollow }: { side: "l" | "r"; color: string; kind?: "c" | "d"; hollow?: boolean }) => (
  <span
    className={`absolute top-1/2 ${side === "l" ? "left-0" : "left-full"} -translate-x-1/2 -translate-y-1/2 ${kind === "c" ? "w-[8px] h-[8px] rounded-full" : "w-[6.5px] h-[6.5px] rotate-45"} ${color} ${hollow ? "border-[1.5px]" : ""}`}
  />
);
const Field = ({ label, val, className = "" }: { label: string; val: string; className?: string }) => (
  <div className={`mx-[10px] flex items-center justify-between h-[17px] bg-[#545454] rounded-[3px] px-[13px] text-[#d8d8d8] ${className}`}>
    <span>{label}</span>
    <span>{val}</span>
  </div>
);

function Nodes() {
  return (
    <div className="text-[10px] tracking-[-0.1px]">
      <svg className="absolute inset-0" width="1015" height="969" viewBox="570 26 1015 969" fill="none">
        <path d="M760 537 C802 537 790 623 832 623" stroke="#2f6f62" strokeWidth="3" />
        <path d="M760 537 C802 537 790 623 832 623" stroke="#a6ecd5" strokeWidth="1.6" />
        <path d="M957 534 L1418 534" stroke="#2f6f62" strokeWidth="3" />
        <path d="M957 534 L1418 534" stroke="#a6ecd5" strokeWidth="1.6" />
      </svg>

      <div className="absolute left-[65px] top-[480px] w-[125px] h-[126px] rounded-[4px] bg-[#303030] shadow-[0_2px_6px_rgba(0,0,0,0.5)] text-[#c8c8c8]">
        <div className="flex items-center h-[18px] rounded-t-[4px] bg-[#1d725e] pl-[9px] gap-[5px] text-[#d8d8d8]"><Chev /><span>Grid</span></div>
        <div className="relative h-[20px] mt-[3px] flex items-center justify-end pr-[10px]">Mesh<Sock side="r" color="bg-[#00d6a3]" /></div>
        {[["Size X", "1 m", "bg-[#a1a1a1]"], ["Size Y", "1 m", "bg-[#a1a1a1]"], ["Vertices X", "10", "bg-[#598c5c]"], ["Vertices Y", "10", "bg-[#598c5c]"]].map(([l, v, c], i) => (
          <div key={l} className={`relative flex items-center h-[19.8px] ${i === 0 ? "mt-[2px]" : ""}`}>
            <div className="w-full"><Field label={l} val={v} /></div>
            <Sock side="l" color={c} />
          </div>
        ))}
      </div>

      <div className="absolute left-[262px] top-[477px] w-[125px] h-[212px] rounded-[4px] bg-[#303030] border border-[#f0f0f0] shadow-[0_2px_6px_rgba(0,0,0,0.5)] text-[#c8c8c8]">
        <div className="flex items-center h-[17px] rounded-t-[3px] bg-[#1d725e] pl-[9px] gap-[5px] text-[#d8d8d8]"><Chev /><span>Extrude Mesh</span></div>
        <div className="relative h-[20px] mt-[3px] flex items-center justify-end pr-[10px]">Mesh<Sock side="r" color="bg-[#00d6a3]" /></div>
        <div className="relative h-[20px] flex items-center justify-end pr-[10px]">Top<Sock side="r" color="bg-[#c8a2d8]" kind="d" /></div>
        <div className="relative h-[20px] flex items-center justify-end pr-[10px]">Side<Sock side="r" color="bg-[#c8a2d8]" kind="d" /></div>
        <div className="mx-[10px] mt-[8px] h-[16px] rounded-[3px] bg-[#282828] border border-[#3a3a3a] flex items-center justify-between pl-[6px] pr-[3px] text-[#d8d8d8]"><span>Faces</span><Chev /></div>
        <div className="relative h-[19.8px] mt-[5px] flex items-center pl-[10px]">Mesh<Sock side="l" color="bg-[#00d6a3]" /></div>
        <div className="relative h-[19.8px] flex items-center pl-[10px]">Selection<Sock side="l" color="bg-[#303030] border-[#c8a2d8]" kind="d" hollow /></div>
        <div className="relative h-[19.8px] flex items-center pl-[10px]">Offset<Sock side="l" color="bg-[#6363c7]" kind="d" /></div>
        <div className="relative h-[19.8px] flex items-center">
          <div className="w-full mx-[10px] h-[17px] bg-[#545454] rounded-[3px] flex items-center justify-center gap-[7px] text-[#d8d8d8]"><span>Offset Sca</span><span>0.000</span></div>
          <Sock side="l" color="bg-[#303030] border-[#a1a1a1]" kind="d" hollow />
        </div>
        <div className="relative h-[19.8px] flex items-center pl-[10px] gap-[3px] text-[#d8d8d8]">
          <span className="w-[12px] h-[12px] rounded-[2px] bg-[#4772b3] flex items-center justify-center"><svg width="10" height="10" viewBox="0 0 10 10" fill="none" stroke="#fff" strokeWidth="1.7"><path d="M1.5 5 L4 8 L8.5 2" /></svg></span>
          Individual
          <Sock side="l" color="bg-[#c8a2d8]" />
        </div>
      </div>

      <div className="absolute left-[848px] top-[477px] w-[125px] h-[64px] rounded-[4px] bg-[#303030] shadow-[0_2px_6px_rgba(0,0,0,0.5)] text-[#c8c8c8]">
        <div className="flex items-center h-[18px] rounded-t-[4px] bg-[#1d1d1d] pl-[9px] gap-[5px] border-t border-x border-[#282828] text-[#d0d0d0]"><Chev /><span>Group Output</span></div>
        <div className="relative h-[20px] mt-[3px] flex items-center pl-[10px]">Geometry<Sock side="l" color="bg-[#00d6a3]" /></div>
        <div className="relative h-[20px]"><Sock side="l" color="bg-[#1d1d1d] border-[#808080]" hollow /></div>
      </div>

      <svg className="absolute inset-0" width="1015" height="969" viewBox="570 26 1015 969" fill="none" stroke="#7dfb9c" strokeLinecap="round" strokeLinejoin="round">
        <path d="M975 556 C970 546 955 541 935 543 C920 545 910 552 912 558 C916 565 935 568 950 566 C965 564 975 560 975 555" strokeWidth="4.4" />
        <g transform="translate(960 300) scale(0.3827 0.3333)">
          {[
            "M228 295 C210 330 205 378 232 385 C255 388 272 360 280 338 C278 362 290 378 312 340",
            "M345 325 C365 335 385 325 372 305 C355 295 340 320 345 335 C355 355 385 355 400 330",
            "M545 255 C525 275 525 315 555 322 C572 322 590 300 600 280 C596 300 610 312 625 305 C635 300 645 295 652 290",
            "M690 268 C698 252 715 250 720 262 C722 272 732 272 738 266 M690 268 C695 278 712 275 720 262",
            "M755 250 C760 262 760 262 762 262 C772 240 790 240 795 250 C800 262 810 262 820 255",
            "M815 102 C825 150 840 200 855 235",
            "M795 222 C820 215 850 210 878 200",
            "M1040 150 C1015 165 995 190 1005 205 C1020 210 1045 190 1050 165 C1050 185 1060 198 1085 190",
            "M1130 130 C1105 145 1090 180 1115 195 C1130 200 1150 185 1160 175",
            "M1170 165 C1190 165 1215 140 1195 125 C1170 130 1160 165 1185 175 C1210 180 1250 150 1270 130 C1250 130 1225 130 1225 150 C1230 170 1260 165 1290 140",
            "M1335 60 C1325 90 1322 130 1305 158",
            "M1300 75 C1350 50 1400 70 1405 100 C1400 125 1340 130 1310 125",
            "M327 500 C340 530 360 560 375 580",
            "M305 575 C345 565 370 560 400 545",
            "M420 515 C400 530 410 550 435 550 C460 545 465 515 435 515",
            "M572 415 C590 440 620 480 640 512",
            "M580 505 C610 490 640 470 665 462",
            "M620 425 C635 450 650 480 665 470 C675 445 690 450 700 470",
            "M730 445 C735 460 740 475 750 475",
            "M790 400 C755 415 780 430 795 440 C810 460 785 478 765 470",
            "M183 447 C140 500 90 570 65 640",
            "M40 595 C35 630 45 660 70 655 C100 645 125 625 143 600",
          ].map((d) => <path key={d} d={d} strokeWidth="4.2" vectorEffect="non-scaling-stroke" />)}
        </g>
      </svg>
    </div>
  );
}

function NodeEditor() {
  return (
    <div className="relative h-full overflow-hidden rounded-[5px] bg-[#1d1d1d]">
      <svg className="absolute inset-0 w-full h-full">
        <defs>
          <pattern id="dots" x="-1" y="10" width="18" height="18" patternUnits="userSpaceOnUse"><rect width="2" height="2" fill="#2a2a2a" /></pattern>
          <pattern id="bigdots" x="16" y="28" width="90" height="90" patternUnits="userSpaceOnUse"><rect width="3" height="3" fill="#2e2e2e" /></pattern>
        </defs>
        <rect width="100%" height="100%" fill="url(#dots)" />
        <rect width="100%" height="100%" fill="url(#bigdots)" />
      </svg>
      <div className="relative flex items-center h-[26px] pl-[7px] pr-[7px] text-[#d8d8d8]">
        <Dd className="w-[33px]"><GeoI /><Chev /></Dd>
        <span className="ml-[11px]">View</span>
        <span className="ml-[16px]">Select</span>
        <span className="ml-[15px]">Add</span>
        <span className="ml-[14px]">Node</span>
        <div className="absolute left-[378px] top-[3px] flex h-[20px] rounded-[3px] overflow-hidden border border-[#3d3d3d]">
          <div className="flex w-[31px] items-center justify-center gap-[1px] bg-[#282828]"><NodeTreeI /><Chev /></div>
          <div className="flex w-[120px] items-center bg-[#1a1a1a] pl-[7px]">Geometry Nodes</div>
          <div className="flex w-[20px] items-center justify-center bg-[#4a4a4a]"><Shield /></div>
          <div className="flex w-[20px] items-center justify-center bg-[#4a4a4a]"><CopyI /></div>
          <div className="flex w-[20px] items-center justify-center bg-[#545454]"><XI /></div>
        </div>
        <span className="absolute left-[597px] top-[5px]"><PinI /></span>
        <div className="ml-auto flex items-center">
          <div className="w-[20px] h-[20px] rounded-[3px] bg-[#282828] flex items-center justify-center text-[#666]"><Sv><path d="M4 5 L7.5 1.5 L11 5 M7.5 2 V14 H14" /></Sv></div>
          <div className="ml-[6px] flex rounded-[3px] overflow-hidden border border-[#3d3d3d]">
            <Seg className="w-[18px] bg-[#545454] !h-[18px] !text-[#aaa]"><Magnet /></Seg>
            <Seg className="w-[32px] gap-[1px] bg-[#282828] !h-[18px]"><GridSnap /><Chev /></Seg>
          </div>
          <div className="ml-[6px] flex rounded-[3px] overflow-hidden border border-[#3d3d3d]">
            <Seg className="w-[19px] bg-[#4772b3] !h-[18px]"><Overlay /></Seg>
            <Seg className="w-[20px] bg-[#282828] !h-[18px]"><Chev /></Seg>
          </div>
        </div>
      </div>
      <div className="relative flex items-center h-[17px] mt-[12px] pl-[18px] text-[#d0d0d0]">
        <ObjB />
        <span className="ml-[7px]">Cube</span>
        <span className="ml-[11px]"><Right /></span>
        <span className="ml-[10px]"><GeoI /></span>
        <span className="ml-[7px]">GeometryNodes</span>
        <span className="ml-[14px]"><Right /></span>
        <span className="ml-[9px]"><NodeTreeI /></span>
        <span className="ml-[6px]">Geometry Nodes</span>
      </div>
      <Nodes />
      <span className="absolute right-[0px] top-[39px] w-[7px] h-[16px] text-[#bbb] text-[10px] leading-[15px]">‹</span>
      <div className="absolute right-[1px] top-[34px] bottom-[9px] w-[3px] bg-[#333] rounded-full" />
      <div className="absolute left-[5px] right-[9px] bottom-[3px] h-[3px] bg-[#333] rounded-full" />
    </div>
  );
}

function Outliner() {
  const EyeCam = ({ className }: P) => (
    <div className="absolute left-[284px] flex items-center gap-[6px]"><Eye className={className} /><CamR className={className} /></div>
  );
  const Row = ({ bg, children, check, hl }: { bg: string; children: React.ReactNode; check?: boolean; hl?: boolean }) => (
    <div className={`relative flex items-center h-[20px] ${bg}`}>
      {children}
      {check && <span className="absolute left-[267px]"><Check /></span>}
      <EyeCam className={hl ? "text-[#d8e4f8]" : undefined} />
    </div>
  );
  const Tri = ({ down }: { down?: boolean }) => (
    <span className={`block w-0 h-0 ${down ? "border-x-[3.5px] border-x-transparent border-t-[6px] border-t-[#b8b8b8]" : "border-y-[3.5px] border-y-transparent border-l-[6px] border-l-[#b8b8b8]"}`} />
  );
  return (
    <div className="relative h-[274px] shrink-0 rounded-[5px] overflow-hidden bg-[#303030] text-[#c8c8c8]">
      <div className="flex items-center h-[26px] pl-[7px] pr-[8px] text-[#e0e0e0]">
        <Dd className="w-[32px]"><TreeI /><Chev /></Dd>
        <Dd className="w-[32px] ml-[5px]"><ImagesI /><Chev /></Dd>
        <div className="ml-[23px] w-[110px] h-[20px] rounded-[3px] bg-[#1d1d1d] border border-[#3d3d3d] flex items-center pl-[3px]"><SearchI /></div>
        <Dd className="w-[32px] ml-auto"><FilterI /><Chev /></Dd>
        <div className="w-[20px] h-[20px] ml-[5px] rounded-[3px] bg-[#545454] flex items-center justify-center"><NewColl /></div>
      </div>
      <div className="bg-[#2b2b2b] h-[248px]">
        <div className="relative flex items-center h-[20px] bg-[#2b2b2b] pl-[23px]"><Box /><span className="ml-[7px]">Scene Collection</span></div>
        <Row bg="bg-[#2f2f2f]" check><span className="ml-[26px] w-[10px]"><Tri down /></span><span className="ml-[7px]"><Box /></span><span className="ml-[7px]">Collection</span></Row>
        <Row bg="bg-[#2b2b2b]"><span className="ml-[47px] w-[10px]"><Tri /></span><span className="ml-[5px]"><CamO /></span><span className="ml-[7px]">Camera</span><span className="absolute left-[143px] w-[20px] h-[20px] rounded-[4px] bg-[#545454] flex items-center justify-center"><CamG /></span></Row>
        <Row bg="bg-[#334d80]" hl><span className="ml-[47px] w-[10px]"><Tri /></span><span className="ml-[4px]"><TriO /></span><span className="ml-[5px] text-[#f5a623]">Cube</span><span className="absolute left-[131px]"><Wr /></span><span className="absolute left-[151px]"><MeshI className="text-[#10c0a0]" /></span></Row>
        <Row bg="bg-[#2f2f2f]" check><span className="ml-[26px] w-[10px]"><Tri down /></span><span className="ml-[2px] w-[19px] h-[18px] rounded-[4px] bg-[#3f3f3f] border border-[#666] flex items-center justify-center"><Box /></span><span className="ml-[5px]">Lights</span></Row>
        <Row bg="bg-[#2b2b2b]"><span className="ml-[47px] w-[10px]"><Tri /></span><span className="ml-[6px]"><Bulb /></span><span className="ml-[7px]">Back (BLUE)</span><span className="absolute left-[168px]"><Sun /></span></Row>
        <Row bg="bg-[#2f2f2f]"><span className="ml-[47px] w-[10px]"><Tri /></span><span className="ml-[6px]"><Bulb /></span><span className="ml-[7px]">Fill (GREEN)</span><span className="absolute left-[167px]"><Sun /></span></Row>
        <Row bg="bg-[#2b2b2b]"><span className="ml-[47px] w-[10px]"><Tri /></span><span className="ml-[6px]"><Bulb /></span><span className="ml-[7px]">Key (RED)</span><span className="absolute left-[157px]"><Sun /></span></Row>
      </div>
      <div className="absolute left-[29px] top-[71px] h-[30px] w-px bg-[#555]" />
      <div className="absolute left-[29px] top-[131px] h-[50px] w-px bg-[#555]" />
    </div>
  );
}

function Tabs() {
  const Tab = ({ children, active, mb }: { children: React.ReactNode; active?: boolean; mb?: string }) => (
    <div className={`flex items-center justify-center w-[26px] h-[28px] shrink-0 ${active ? "bg-[#303030] rounded-l-[4px]" : ""} ${mb || ""}`}>{children}</div>
  );
  const red = "#a8505c", blue = "#5b80c8";
  return (
    <div className="flex flex-col items-end w-[28px] shrink-0 bg-[#1d1d1d] pt-[8px]">
      <Tab mb="mb-[8px]"><svg width="16" height="16" viewBox="0 0 16 16" fill="#e0e0e0"><path d="M3 1 H5 V7 H3 Z M2 8 H6 V15 H2 Z" /><path d="M11 1 L11 4.5 H13 V1 C15 2 15.5 5 13.5 6.5 V15 H10.5 V6.5 C8.5 5 9 2 11 1 Z" /></svg></Tab>
      <Tab><svg width="16" height="16" viewBox="0 0 16 16" fill="none" stroke="#d8d8d8" strokeWidth="1.2"><rect x="1.5" y="4" width="13" height="10" /><rect x="3.5" y="6.5" width="7" height="5" fill="#d8d8d8" stroke="none" /><rect x="4" y="1.5" width="5" height="2" fill="#d8d8d8" stroke="none" /><rect x="12" y="6.5" width="1.5" height="1.5" fill="#d8d8d8" stroke="none" /><rect x="12" y="10" width="1.5" height="1.5" fill="#d8d8d8" stroke="none" /></svg></Tab>
      <Tab><svg width="16" height="16" viewBox="0 0 16 16" fill="#d8d8d8"><rect x="1.5" y="1.5" width="13" height="3" /><path d="M1.5 5.5 H14.5 V11 H12.5 V15 H3.5 V11 H1.5 Z" /><path d="M5 13 L7 9.5 L8.5 11.5 L9.5 10.5 L11 13 Z" fill="#222" /></svg></Tab>
      <Tab><span className="text-[#d8d8d8]"><ImagesI /></span></Tab>
      <Tab><SceneI /></Tab>
      <Tab mb="mb-[8px]"><svg width="16" height="16" viewBox="0 0 16 16" fill="none" stroke={red} strokeWidth="1.3"><circle cx="8" cy="8" r="6.5" /><path d="M4 3 L8 4 L9 7 L5 9 Z M10 9 L13 8 L12 13 L9 12 Z" fill={red} stroke="none" /></svg></Tab>
      <Tab mb="mb-[8px]"><Box /></Tab>
      <Tab><svg width="16" height="16" viewBox="0 0 16 16" fill="none" stroke="#b07a4a" strokeWidth="1.1"><path d="M1.5 4.5 V1.5 H4.5 M11.5 1.5 H14.5 V4.5 M14.5 11.5 V14.5 H11.5 M4.5 14.5 H1.5 V11.5" /><rect x="4" y="4" width="8" height="8" fill="#c8895a" stroke="none" /></svg></Tab>
      <Tab active><Wr className="text-[#6f9cf0]" f /></Tab>
      <Tab><svg width="16" height="16" viewBox="0 0 16 16" fill={blue} stroke={blue} strokeWidth="1.1"><circle cx="3" cy="3" r="2.2" /><circle cx="13" cy="3" r="1.3" /><circle cx="3" cy="13" r="1.3" /><circle cx="13" cy="13" r="1.8" /><path d="M3 3 H13 M3 3 V13 M3 3 L13 13" /></svg></Tab>
      <Tab><svg width="16" height="16" viewBox="0 0 16 16" fill="none" stroke={blue} strokeWidth="1.2"><circle cx="7" cy="8.5" r="2.5" fill={blue} stroke="none" /><circle cx="13" cy="3" r="1.8" fill={blue} stroke="none" /><path d="M11 2.3 A6.5 6.5 0 1 0 14 8" /></svg></Tab>
      <Tab><svg width="16" height="16" viewBox="0 0 16 16" fill="none" stroke={blue} strokeWidth="1.2"><path d="M1.5 9 A6 6 0 0 0 13 11 C15 7 15.5 3 14 1.5 C12 .5 9 2 5 3.5 C3 4.5 1.5 6.5 1.5 9 Z" /><circle cx="6" cy="9" r="3" /><circle cx="6" cy="9" r="1" /></svg></Tab>
      <Tab><MeshI className="text-[#00a87f]" /></Tab>
      <Tab mb="mb-[8px]"><svg width="16" height="16" viewBox="0 0 16 16"><circle cx="8" cy="8" r="7" fill={red} /><path d="M8 1.5 V8 H1.5 A6.5 6.5 0 0 1 8 1.5 Z" fill="#2a1f22" transform="rotate(180 8 8)" /></svg></Tab>
      <Tab><svg width="15" height="15" viewBox="0 0 15 15"><rect width="15" height="15" fill="#141414" />{Array.from({ length: 25 }, (_, i) => ((i % 5) + Math.floor(i / 5)) % 2 === 0 ? <rect key={i} x={(i % 5) * 3} y={Math.floor(i / 5) * 3} width="3" height="3" fill={red} /> : null)}</svg></Tab>
    </div>
  );
}

function Properties() {
  return (
    <div className="flex flex-col flex-1 mt-[3px] rounded-[5px] overflow-hidden bg-[#303030] text-[#d0d0d0]">
      <div className="flex items-center h-[26px] shrink-0 pl-[9px] pr-[8px] text-[#e0e0e0] bg-[#2c2c2c]">
        <Dd className="w-[31px]"><svg width="16" height="14" viewBox="0 0 16 14" fill="none" stroke="#e8e8e8" strokeWidth="1.1"><rect x="1" y="1" width="14" height="5" rx="2.5" fill="#e8e8e8" /><rect x="1" y="8" width="14" height="5" rx="2.5" fill="#e8e8e8" /><circle cx="11" cy="3.5" r="1.6" fill="#333" stroke="none" /><circle cx="5" cy="10.5" r="1.6" fill="#333" stroke="none" /></svg><Chev /></Dd>
        <div className="ml-[72px] w-[110px] h-[20px] rounded-[3px] bg-[#1d1d1d] border border-[#3d3d3d] flex items-center pl-[3px]"><SearchI /></div>
        <Dd className="ml-auto w-[19px]"><Chev /></Dd>
      </div>
      <div className="flex flex-1 min-h-0">
        <Tabs />
        <div className="flex-1 min-w-0 pl-[8px] pr-[9px]">
          <div className="flex items-center h-[18px] mt-[9px] pl-[2px] text-[#d0d0d0]">
            <ObjB />
            <span className="ml-[8px]">Cube</span>
            <span className="ml-[14px]"><Right /></span>
            <span className="ml-[6px]"><GeoI /></span>
            <span className="ml-[9px]">GeometryNodes</span>
            <span className="ml-auto mr-[1px]"><PinI /></span>
          </div>
          <div className="mt-[17px] h-[20px] rounded-[3px] bg-[#282828] border border-[#3a3a3a] flex items-center justify-between pl-[7px] pr-[3px]"><span>Add Modifier</span><Chev /></div>
          <div className="mt-[10px] h-[110px] rounded-[4px] border border-[#4772b3] bg-[#3a3a3a]">
            <div className="flex items-center h-[18px] mt-[3px] pl-[7px]">
              <Chev />
              <span className="ml-[5px]"><GeoI /></span>
              <div className="ml-[11px] flex shrink-0 h-[18px] rounded-[3px] overflow-hidden">
                <div className="w-[87px] bg-[#1a1a1a] flex items-center pl-[7px] whitespace-nowrap">GeometryNod...</div>
                <Seg className="w-[20px] !h-[18px] bg-[#545454]"><MeshI className="text-[#e8e8e8]" /></Seg>
                <Seg className="w-[20px] !h-[18px] bg-[#4772b3] ml-[.5px]"><Sv className="text-[#e8e8e8]"><rect x="2.5" y="3.5" width="10" height="10" strokeDasharray="2 1" /><rect x="9" y="1" width="5" height="5" fill="currentColor" stroke="none" /></Sv></Seg>
                <Seg className="w-[20px] !h-[18px] bg-[#4772b3] ml-[.5px]"><Sv className="text-[#e8e8e8]"><rect x="1.5" y="2.5" width="13" height="9" /><rect x="3.5" y="4.5" width="9" height="5" fill="currentColor" stroke="none" /><path d="M5 14 H11" /></Sv></Seg>
                <Seg className="w-[20px] !h-[18px] bg-[#4772b3] ml-[.5px]"><CamR className="text-[#f0f0f0]" /></Seg>
                <Seg className="w-[19px] !h-[18px] bg-[#1a1a1a]"><Chev /></Seg>
              </div>
              <span className="ml-[6px]"><XI /></span>
              <span className="ml-[16px]"><svg width="12" height="6" viewBox="0 0 12 6" fill="#9a9a9a"><circle cx="1" cy="1" r=".7" /><circle cx="4" cy="1" r=".7" /><circle cx="7" cy="1" r=".7" /><circle cx="10" cy="1" r=".7" /><circle cx="1" cy="4" r=".7" /><circle cx="4" cy="4" r=".7" /><circle cx="7" cy="4" r=".7" /><circle cx="10" cy="4" r=".7" /></svg></span>
            </div>
            <div className="flex h-[19px] mx-[8px] mt-[12px] rounded-[3px] overflow-hidden">
              <div className="flex w-[31px] items-center justify-center gap-[1px] bg-[#282828]"><NodeTreeI /><Chev /></div>
              <div className="w-[178px] bg-[#1a1a1a] flex items-center pl-[7px]">Geometry Nodes</div>
              <div className="flex w-[20px] items-center justify-center bg-[#545454]"><Shield /></div>
              <div className="flex w-[20px] items-center justify-center bg-[#545454]"><CopyI /></div>
              <div className="flex w-[19px] items-center justify-center bg-[#545454]"><XI /></div>
            </div>
            <div className="flex items-center h-[25px] mt-[8px] pl-[19px] gap-[7px]"><Right /><span>Output Attributes</span></div>
            <div className="flex items-center h-[25px] pl-[19px] gap-[7px]"><Right /><span>Internal Dependencies</span></div>
          </div>
        </div>
      </div>
    </div>
  );
}

const Mouse = ({ k }: { k: "l" | "m" | "r" }) => (
  <svg width="11" height="15" viewBox="0 0 11 15" fill="none" stroke="#a8a8a8" strokeWidth="1.1">
    <rect x="1" y="1" width="9" height="13" rx="3.5" />
    {k === "l" && <path d="M4.5 1 H3 A2 2 0 0 0 1 3.5 V6.5 H5.5 V1 Z" fill="#a8a8a8" stroke="none" />}
    {k === "r" && <path d="M5.5 1 H7.5 A2 2 0 0 1 10 3.5 V6.5 H5.5 V1 Z" fill="#a8a8a8" stroke="none" />}
    {k === "m" && <rect x="4" y="3" width="3" height="5" rx="1" fill="#a8a8a8" stroke="none" />}
  </svg>
);

export default function App() {
  return (
    <div className="flex flex-col h-screen w-screen overflow-hidden bg-[#161616] font-['DejaVu_Sans',sans-serif] text-[10.6px] tracking-[-0.28px] leading-none">
      <TopBar />
      <div className="flex flex-1 min-h-0 pl-[1px]">
        <div className="flex flex-col w-[566px] shrink-0">
          <Viewport />
          <Spreadsheet />
        </div>
        <div className="w-[1015px] ml-[3px] shrink-0"><NodeEditor /></div>
        <div className="flex flex-col w-[332px] ml-[3px] shrink-0">
          <Outliner />
          <Properties />
        </div>
      </div>
      <div className="flex items-center h-[19px] pt-[1px] shrink-0 bg-[#1d1d1d] text-[#a0a0a0]">
        <span className="ml-[12px]"><Mouse k="l" /></span>
        <span className="ml-[201px]"><Mouse k="m" /></span>
        <span className="ml-[10px]">Pan View</span>
        <span className="ml-[143px]"><Mouse k="r" /></span>
        <span className="ml-auto pr-[10px]">Lights | Cube | Verts:424 | Faces:405 | Tris:810 | Objects:1/5 | 3.3.0</span>
      </div>
    </div>
  );
}
